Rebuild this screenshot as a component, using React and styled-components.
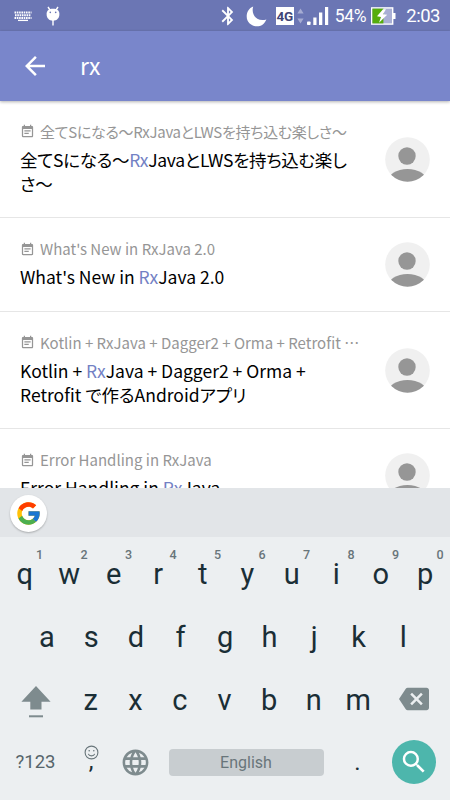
import React from 'react';
import styled, { createGlobalStyle } from 'styled-components';
import { FcGoogle } from 'react-icons/fc';
import { MdArrowBack, MdBackspace, MdBluetooth, MdEventNote, MdLanguage, MdSearch } from 'react-icons/md';

const sessions = [
    { title: '全てSになる〜RxJavaとLWSを持ち込む楽しさ〜', height: 117, tracking: '-0.3px' },
    { title: "What's New in RxJava 2.0", height: 94 },
    { title: 'Kotlin + RxJava + Dagger2 + Orma + Retrofit で作るAndroidアプリ', height: 117 },
    { title: 'Error Handling in RxJava', height: 94 },
];

const topKeys = ['q', 'w', 'e', 'r', 't', 'y', 'u', 'i', 'o', 'p'];
const homeKeys = ['a', 's', 'd', 'f', 'g', 'h', 'j', 'k', 'l'];
const bottomKeys = ['z', 'x', 'c', 'v', 'b', 'n', 'm'];

function KeyboardIcon() {
    return (
        <svg width="18" height="11" viewBox="0 0 18 11" fill="none" stroke="#fff">
            <path d="M0.5 1.5H17.5" strokeWidth="2" strokeDasharray="1.6 .7" />
            <path d="M1 4.3H17" strokeWidth="2" strokeDasharray="1.6 .7" />
            <path d="M0.5 7H17.5" strokeWidth="1.8" strokeDasharray="1.6 .7" />
            <path d="M4 9.4H14" strokeWidth="1.3" />
        </svg>
    );
}

function DroidIcon() {
    return (
        <svg width="14" height="20" viewBox="0 0 14 20">
            <path d="M2 1L4 4M12 1L10 4M7 14V19.5" stroke="#fff" strokeWidth="1.4" />
            <path d="M.6 8C.6 4.6 3 2.8 7 2.8S13.4 4.6 13.4 8C13.4 12 11 14.7 7 14.7S.6 12 .6 8Z" fill="#fff" />
            <circle cx="4.3" cy="6.4" r=".8" fill="#6b76b4" />
            <circle cx="9.7" cy="6.4" r=".8" fill="#6b76b4" />
        </svg>
    );
}

function MoonIcon() {
    return (
        <svg width="21" height="21" viewBox="0 0 21 21">
            <path d="M7.2.4C4.8 8.2 10.5 16.3 20.4 13.4C18.5 18 15 20.3 11 20.3C5.3 20.3.7 16 .7 10.5C.7 6 3 2 7.2.4Z" fill="#fff" />
        </svg>
    );
}

function DataArrows() {
    return (
        <svg width="7" height="18" viewBox="0 0 7 18" fill="#a6acd3">
            <path d="M3.5 1.5L6.6 6.5H.4ZM3.5 16.5L.4 11.5H6.6Z" />
        </svg>
    );
}

function SignalIcon() {
    return (
        <svg width="22" height="19" viewBox="0 0 22 19" fill="#fff">
            <rect x="0" y="14.5" width="3.6" height="3.5" rx=".8" />
            <rect x="6.3" y="10.5" width="3.2" height="7.5" />
            <rect x="12" y="5.5" width="3.3" height="12.5" />
            <rect x="18" y="0" width="3.2" height="18" />
        </svg>
    );
}

function BatteryIcon() {
    return (
        <svg width="25" height="18" viewBox="0 0 25 18">
            <rect x=".7" y=".9" width="21" height="16.2" fill="#a9afd5" stroke="#fff" strokeWidth="1.4" />
            <rect x="1.4" y="1.6" width="11" height="14.8" fill="#55ad0c" />
            <rect x="22" y="6" width="2.5" height="6" fill="#fff" />
            <path d="M12 2.3L6 9.3L10 10L8 15.8L16.2 7.8L12 7.2L15 2.3Z" fill="#fff" />
        </svg>
    );
}

function Person() {
    return (
        <svg width="45" height="45" viewBox="0 0 45 45">
            <clipPath id="face"><circle cx="22.5" cy="22.5" r="22.3" /></clipPath>
            <circle cx="22.5" cy="22.5" r="22.3" fill="#f0f0f0" />
            <g clipPath="url(#face)" fill="#969696">
                <circle cx="22" cy="19" r="8.7" />
                <ellipse cx="22.5" cy="45" rx="20" ry="13" />
            </g>
        </svg>
    );
}

function ShiftIcon() {
    return (
        <svg width="30" height="32" viewBox="0 0 30 32" fill="#7e8b8e">
            <path d="M15 0L29.6 15.7H20.5V23.5H9.3V15.7H.4Z" />
            <rect x="8" y="29.3" width="14" height="2" />
        </svg>
    );
}

function SmileIcon() {
    return (
        <svg width="15" height="15" viewBox="0 0 15 15" fill="none" stroke="#68757a" strokeWidth="1.1">
            <circle cx="7.5" cy="7.5" r="6.4" />
            <path d="M4.3 8.8C5.2 11.5 9.8 11.5 10.7 8.8" />
            <circle cx="5.2" cy="5.7" r=".8" fill="#68757a" stroke="none" />
            <circle cx="9.8" cy="5.7" r=".8" fill="#68757a" stroke="none" />
        </svg>
    );
}

function Session({ title, height, tracking }) {
    const [before, after] = title.split('Rx');
    return (
        <SessionRow $height={height}>
            <SessionText $tracking={tracking}>
                <Caption>
                    <MdEventNote />
                    <span>{title}</span>
                </Caption>
                <Title>{before}<mark>Rx</mark>{after}</Title>
            </SessionText>
            <Person />
        </SessionRow>
    );
}

function App() {
    return (
        <Screen>
            <GlobalStyle />
            <StatusBar>
                <StatusGroup $gap="14px">
                    <KeyboardIcon />
                    <DroidIcon />
                </StatusGroup>
                <StatusGroup>
                    <BluetoothSlot><MdBluetooth /></BluetoothSlot>
                    <MoonIcon />
                    <Network>4G</Network>
                    <DataArrows />
                    <SignalIcon />
                    <Percent>54%</Percent>
                    <BatteryIcon />
                    <Clock>2:03</Clock>
                </StatusGroup>
            </StatusBar>
            <Toolbar>
                <MdArrowBack />
                <Query>rx</Query>
            </Toolbar>
            <Results>
                {sessions.map((session) => <Session key={session.title} {...session} />)}
            </Results>
            <Keyboard>
                <Suggestions>
                    <GoogleButton><FcGoogle /></GoogleButton>
                </Suggestions>
                <Keys>
                    <KeyRow $inset="2.5px">
                        {topKeys.map((letter, i) => (
                            <Key key={letter}>{letter}<Hint>{(i + 1) % 10}</Hint></Key>
                        ))}
                    </KeyRow>
                    <KeyRow $inset="24.5px">
                        {homeKeys.map((letter) => <Key key={letter}>{letter}</Key>)}
                    </KeyRow>
                    <KeyRow $inset="2.5px">
                        <Key $width="66px"><ShiftSlot><ShiftIcon /></ShiftSlot></Key>
                        {bottomKeys.map((letter) => <Key key={letter}>{letter}</Key>)}
                        <Key $width="67px"><BackspaceSlot><MdBackspace /></BackspaceSlot></Key>
                    </KeyRow>
                    <KeyRow $inset="2.5px" $height="62px">
                        <SymbolKey>?123</SymbolKey>
                        <CommaKey><SmileIcon /><span>,</span></CommaKey>
                        <GlobeKey><MdLanguage /></GlobeKey>
                        <SpaceBar>English</SpaceBar>
                        <DotKey>.</DotKey>
                        <SearchButton><MdSearch /></SearchButton>
                    </KeyRow>
                </Keys>
            </Keyboard>
        </Screen>
    );
}

const GlobalStyle = createGlobalStyle`
    * {
        box-sizing: border-box;
    }

    body {
        margin: 0;
        font-family: Roboto, sans-serif;
    }

    svg {
        display: block;
        flex-shrink: 0;
    }
`;

const Screen = styled.div`
    display: flex;
    flex-direction: column;
    width: 450px;
    height: 800px;
    overflow: hidden;
    background: #fff;
`;

const StatusBar = styled.div`
    display: flex;
    justify-content: space-between;
    height: 31px;
    padding: 0 10px 0 14px;
    background: #6b76b4;
    color: #fff;
`;

const StatusGroup = styled.div`
    display: flex;
    align-items: center;
    gap: ${(props) => props.$gap || 0};
    padding-top: 1px;
`;

const BluetoothSlot = styled.div`
    margin-right: 7px;
    font-size: 22px;
`;

const Network = styled.div`
    width: 18px;
    height: 18px;
    margin: 0 3px 0 9px;
    background: #fff;
    color: #3f4677;
    font-size: 13.5px;
    font-weight: 700;
    letter-spacing: -0.3px;
    line-height: 19px;
    text-align: center;

    & + svg {
        margin-right: 3px;
    }
`;

const Percent = styled.span`
    margin: 0 5px 0 6px;
    font-size: 17.5px;
    letter-spacing: -0.3px;
    line-height: 31px;
`;

const Clock = styled.span`
    margin-left: 10px;
    font-size: 18.5px;
    letter-spacing: -0.5px;
    line-height: 31px;
`;

const Toolbar = styled.header`
    position: relative;
    z-index: 1;
    display: flex;
    align-items: center;
    height: 70px;
    padding-left: 20px;
    background: #7986cb;
    box-shadow: 0 1px 3px rgba(0, 0, 0, 0.3);
    color: #fff;
    font-size: 30px;
`;

const Query = styled.span`
    margin-left: 30px;
    padding-bottom: 2px;
    font-family: "Noto Sans CJK JP", sans-serif;
    font-size: 23px;
    line-height: 30px;
`;

const Results = styled.main`
    height: 387px;
    overflow: hidden;
    font-family: "Noto Sans CJK JP", sans-serif;
    font-feature-settings: "palt";
`;

const SessionRow = styled.article`
    display: flex;
    align-items: center;
    justify-content: space-between;
    height: ${(props) => props.$height}px;
    padding: 0 20px;
    border-bottom: 1px solid #e6e6e6;
`;

const SessionText = styled.div`
    width: 340px;
    letter-spacing: ${(props) => props.$tracking || 'normal'};
`;

const Caption = styled.div`
    display: flex;
    align-items: center;
    gap: 5px;
    height: 20px;
    margin-bottom: 6px;
    color: #969696;
    font-size: 15px;

    span {
        overflow: hidden;
        font-size: 15px;
        line-height: 22px;
        text-overflow: ellipsis;
        white-space: nowrap;
    }
`;

const Title = styled.h2`
    margin: 0;
    color: #000;
    font-size: 17.5px;
    font-weight: 400;
    line-height: 24.5px;

    mark {
        background: none;
        color: #7381c4;
    }
`;

const Keyboard = styled.section`
    height: 312px;
    background: #eceff1;
    color: #1a2e36;
`;

const Suggestions = styled.div`
    height: 49px;
    padding: 7px 10px;
    background: #e2e5e8;
`;

const GoogleButton = styled.div`
    display: grid;
    place-items: center;
    width: 37px;
    height: 37px;
    border-radius: 50%;
    background: #fff;
    box-shadow: 0 1px 2px rgba(0, 0, 0, 0.25);
    font-size: 27px;
`;

const Keys = styled.div`
    padding-top: 5px;
`;

const KeyRow = styled.div`
    display: flex;
    align-items: center;
    height: ${(props) => props.$height || '63px'};
    padding: 0 ${(props) => props.$inset};
`;

const Key = styled.div`
    position: relative;
    display: flex;
    flex: ${(props) => (props.$width ? `0 0 ${props.$width}` : '1')};
    align-items: center;
    justify-content: center;
    height: 100%;
    font-size: 29px;
`;

const Hint = styled.span`
    position: absolute;
    top: 5px;
    right: 4px;
    color: #68757a;
    font-size: 12.5px;
    font-weight: 500;
`;

const ShiftSlot = styled.span`
    padding-top: 5px;
`;

const BackspaceSlot = styled.span`
    padding-bottom: 2px;
    color: #7e8b8e;
    font-size: 30px;
`;

const SymbolKey = styled.div`
    width: 66px;
    color: #56656b;
    font-size: 18.5px;
    text-align: center;
`;

const CommaKey = styled.div`
    display: flex;
    flex-direction: column;
    align-items: center;
    width: 45px;
    padding-bottom: 17px;
    font-size: 24px;
    line-height: 2px;
`;

const GlobeKey = styled.div`
    display: grid;
    place-items: center;
    width: 43px;
    color: #7e8b8e;
    font-size: 31px;
`;

const SpaceBar = styled.div`
    width: 155px;
    height: 27px;
    margin-left: 12px;
    border-radius: 4px;
    background: #c8cdd0;
    color: #68757a;
    font-size: 16px;
    line-height: 27px;
    text-align: center;
`;

const DotKey = styled.div`
    width: 68px;
    font-size: 24px;
    text-align: center;
`;

const SearchButton = styled.div`
    display: grid;
    place-items: center;
    width: 44px;
    height: 44px;
    border-radius: 50%;
    background: #4db6ac;
    color: #fff;
    font-size: 30px;
`;

export default App;
